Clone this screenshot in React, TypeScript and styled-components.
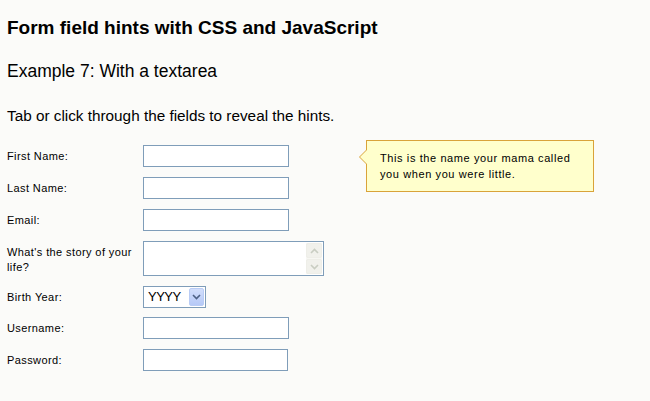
import styled, { createGlobalStyle } from "styled-components";

const GlobalStyle = createGlobalStyle`
  html, body {
    margin: 0;
    padding: 0;
    background: #fbfbf9;
  }
  body {
    font-family: "Liberation Sans", Arial, sans-serif;
    color: #000;
  }
`;

interface Field {
  label: string;
  kind: "text" | "textarea" | "select";
  width?: number;
  hint?: string;
}

const fields: Field[] = [
  {
    label: "First Name:",
    kind: "text",
    hint: "This is the name your mama called you when you were little.",
  },
  { label: "Last Name:", kind: "text" },
  { label: "Email:", kind: "text" },
  { label: "What's the story of your life?", kind: "textarea" },
  { label: "Birth Year:", kind: "select" },
  { label: "Username:", kind: "text" },
  { label: "Password:", kind: "text", width: 145 },
];

const Chevron = ({ up, color }: { up?: boolean; color: string }) => (
  <svg width="9" height="6" viewBox="0 0 9 6">
    <path
      d={up ? "M1 5 L4.5 1.5 L8 5" : "M1 1 L4.5 4.5 L8 1"}
      fill="none"
      stroke={color}
      strokeWidth="1.6"
    />
  </svg>
);

export default function App() {
  return (
    <Page>
      <GlobalStyle />
      <Title>Form field hints with CSS and JavaScript</Title>
      <Subtitle>Example 7: With a textarea</Subtitle>
      <Intro>Tab or click through the fields to reveal the hints.</Intro>
      <Form>
        {fields.map((f) => (
          <Row key={f.label}>
            <Label>{f.label}</Label>
            {f.kind === "text" && <TextInput $width={f.width ?? 146} />}
            {f.kind === "textarea" && (
              <TextArea>
                <ScrollBar>
                  <ScrollButton>
                    <Chevron up color="#c9cdc2" />
                  </ScrollButton>
                  <ScrollButton>
                    <Chevron color="#c9cdc2" />
                  </ScrollButton>
                </ScrollBar>
              </TextArea>
            )}
            {f.kind === "select" && (
              <Select>
                <SelectText>YYYY</SelectText>
                <SelectButton>
                  <Chevron color="#4d6185" />
                </SelectButton>
              </Select>
            )}
            {f.hint && (
              <Hint>
                <HintArrow />
                {f.hint}
              </Hint>
            )}
          </Row>
        ))}
      </Form>
    </Page>
  );
}

const Page = styled.div`
  padding: 17px 7px 20px;
  width: 636px;
  min-height: 364px;
`;

const Title = styled.h1`
  margin: 0;
  font-size: 19px;
  font-weight: bold;
  line-height: 22px;
`;

const Subtitle = styled.h2`
  margin: 22px 0 0;
  font-size: 17.5px;
  font-weight: normal;
  line-height: 20px;
`;

const Intro = styled.p`
  margin: 26px 0 0;
  font-size: 15.3px;
  line-height: 18px;
`;

const Form = styled.div`
  margin-top: 20px;
  display: flex;
  flex-direction: column;
  gap: 10px;
`;

const Row = styled.div`
  position: relative;
  display: grid;
  grid-template-columns: 136px auto;
  align-items: start;
  justify-content: start;
`;

const Label = styled.div`
  font-size: 11px;
  letter-spacing: 0.4px;
  line-height: 15px;
  padding-top: 4px;
  width: 132px;
`;

const TextInput = styled.div<{ $width: number }>`
  box-sizing: border-box;
  width: ${(p) => p.$width}px;
  height: 22px;
  border: 1px solid #7f9db9;
  background: #fff;
`;

const TextArea = styled.div`
  box-sizing: border-box;
  width: 181px;
  height: 35px;
  border: 1px solid #7f9db9;
  background: #fff;
  display: flex;
  justify-content: flex-end;
  padding: 1px;
`;

const ScrollBar = styled.div`
  width: 16px;
  display: flex;
  flex-direction: column;
  gap: 1px;
  background: #f7f7f3;
`;

const ScrollButton = styled.div`
  flex: 1;
  box-sizing: border-box;
  border: 1px solid #eeeee8;
  border-radius: 2px;
  background: #f1f1ec;
  display: flex;
  align-items: center;
  justify-content: center;
`;

const Select = styled.div`
  box-sizing: border-box;
  width: 63px;
  height: 22px;
  margin-bottom: -1px;
  border: 1px solid #7f9db9;
  background: #fff;
  display: flex;
  align-items: stretch;
  padding: 1px;
`;

const SelectText = styled.div`
  flex: 1;
  font-size: 13px;
  line-height: 18px;
  padding-left: 3px;
  letter-spacing: -0.5px;
`;

const SelectButton = styled.div`
  width: 15px;
  box-sizing: border-box;
  border: 1px solid #b9ccf5;
  border-radius: 2px;
  background: linear-gradient(#d2defb, #b6c9f7);
  display: flex;
  align-items: center;
  justify-content: center;
`;

const Hint = styled.div`
  position: absolute;
  left: 359px;
  top: -5px;
  box-sizing: border-box;
  width: 228px;
  height: 52px;
  padding: 9px 14px 0 13px;
  border: 1px solid #d9a33a;
  background: #ffffcc;
  font-size: 11px;
  letter-spacing: 0.6px;
  line-height: 16px;
`;

const HintArrow = styled.span`
  position: absolute;
  left: -8px;
  top: 8px;
  width: 0;
  height: 0;
  border-top: 8px solid transparent;
  border-bottom: 8px solid transparent;
  border-right: 8px solid #d9a33a;

  &::after {
    content: "";
    position: absolute;
    left: 1px;
    top: -7px;
    border-top: 7px solid transparent;
    border-bottom: 7px solid transparent;
    border-right: 7px solid #ffffcc;
  }
`;
